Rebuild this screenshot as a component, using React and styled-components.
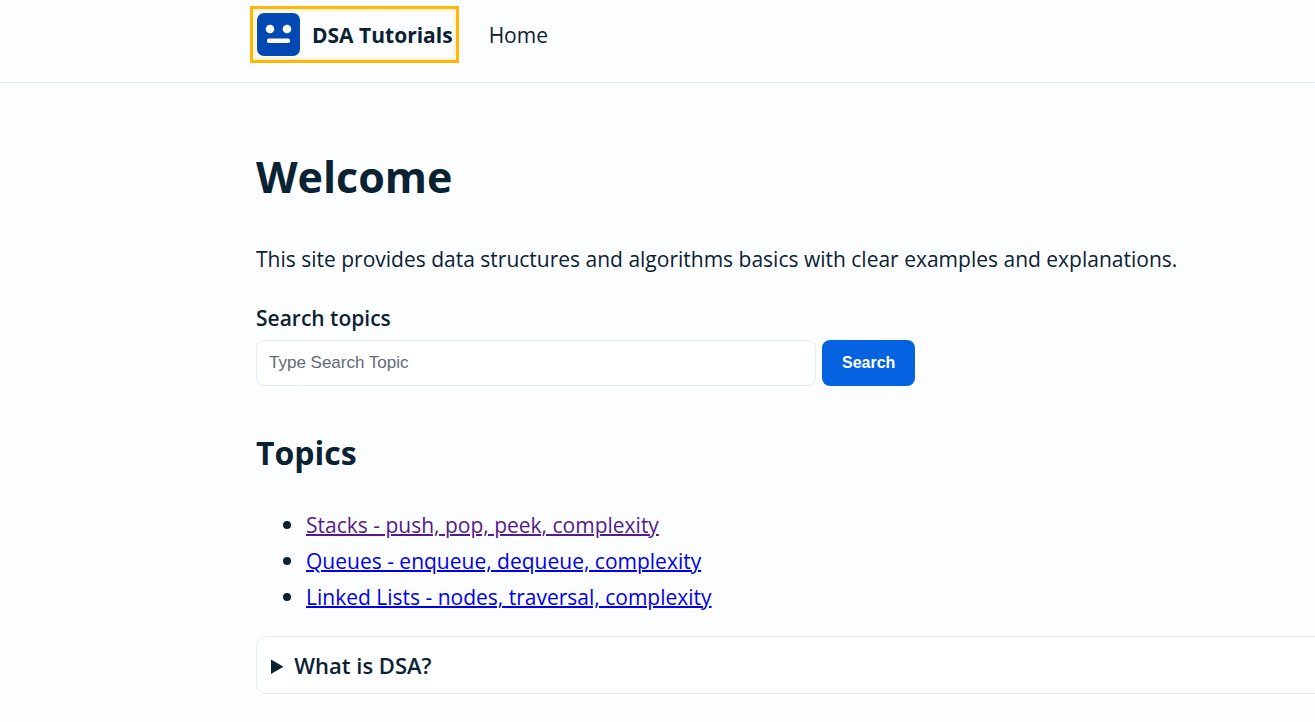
import React from "react";
import styled, { createGlobalStyle } from "styled-components";

const Global = createGlobalStyle`
  *, *::before, *::after { box-sizing: border-box; }
  body {
    margin: 0;
    background: #fcfdff;
    color: #0b2233;
    font-family: "Segoe UI", "Open Sans", "Noto Sans", sans-serif;
    font-size: 21px;
    line-height: 36px;
    overflow-x: hidden;
  }
`;

const Header = styled.header`
  border-bottom: 1px solid #e3edf5;
  padding: 12px 0 25px 256px;
`;

const Nav = styled.nav`
  display: flex;
  align-items: center;
  gap: 36px;
`;

const Brand = styled.a`
  display: flex;
  align-items: center;
  gap: 12px;
  padding: 1px 0;
  color: inherit;
  font-weight: 700;
  text-decoration: none;
  outline: 3px solid #ffb703;
  outline-offset: 3px;
  box-shadow: 0 0 0 3px #fdf5de;
  white-space: nowrap;
`;

const NavLink = styled.a`
  color: inherit;
  text-decoration: none;
`;

const Main = styled.main`
  padding: 63px 0 28px 256px;
`;

const Title = styled.h1`
  margin: 0 0 33px;
  font-size: 43px;
  line-height: 62px;
`;

const Intro = styled.p`
  margin: 0 0 23px;
`;

const SearchForm = styled.form`
  display: grid;
  grid-template-columns: minmax(0, 560px) auto;
  justify-content: start;
  gap: 4px 6px;
`;

const Label = styled.label`
  grid-column: 1 / -1;
  font-weight: 600;
`;

const SearchInput = styled.input`
  width: 100%;
  height: 46px;
  padding: 0 12px;
  border: 1px solid #e3edf5;
  border-radius: 8px;
  background: #fff;
  font: 17px "Liberation Sans", Arial, sans-serif;
  &::placeholder { color: #5f6b76; opacity: 1; }
`;

const SearchButton = styled.button`
  padding: 0 20px;
  border: 0;
  border-radius: 8px;
  background: #0562e0;
  color: #fff;
  font: 700 16px "Liberation Sans", Arial, sans-serif;
`;

const Heading = styled.h2`
  margin: 43px 0 30px;
  font-size: 32px;
  line-height: 48px;
`;

const Topics = styled.ul`
  margin: 0 0 21px;
  padding-left: 50px;
  line-height: 35px;
  li::marker { font-size: 22px; }
`;

const TopicLink = styled.a`
  color: ${({ $visited }) => ($visited ? "#551a8b" : "#0000ee")};
  text-decoration-thickness: 2px;
`;

const Disclosure = styled.details`
  margin-right: -16px;
  padding: 10px 14px;
  border: 1px solid #e3edf5;
  border-radius: 10px;
  background: #fff;
`;

const Summary = styled.summary`
  font-size: 22px;
  font-weight: 600;
`;

const Logo = () => (
  <svg width="44" height="43" viewBox="0 0 44 43" aria-hidden="true">
    <rect x="1" width="43" height="43" rx="7" fill="#0349b4" />
    <circle cx="14" cy="16" r="4.3" fill="#fff" />
    <circle cx="31" cy="16" r="4.3" fill="#fff" />
    <rect x="11" y="25.5" width="23" height="4.5" rx="1.8" fill="#fff" />
  </svg>
);

const topics = [
  { text: "Stacks - push, pop, peek, complexity", visited: true },
  { text: "Queues - enqueue, dequeue, complexity" },
  { text: "Linked Lists - nodes, traversal, complexity" },
];

export default function App() {
  return (
    <>
      <Global />
      <Header>
        <Nav>
          <Brand href="#home"><Logo />DSA Tutorials</Brand>
          <NavLink href="#home">Home</NavLink>
        </Nav>
      </Header>
      <Main>
        <Title>Welcome</Title>
        <Intro>This site provides data structures and algorithms basics with clear examples and explanations.</Intro>
        <SearchForm onSubmit={(e) => e.preventDefault()}>
          <Label htmlFor="topic-search">Search topics</Label>
          <SearchInput id="topic-search" placeholder="Type Search Topic" />
          <SearchButton>Search</SearchButton>
        </SearchForm>
        <Heading>Topics</Heading>
        <Topics>
          {topics.map(({ text, visited }) => (
            <li key={text}><TopicLink href="#topic" $visited={visited}>{text}</TopicLink></li>
          ))}
        </Topics>
        <Disclosure>
          <Summary>What is DSA?</Summary>
          Data structures and algorithms.
        </Disclosure>
      </Main>
    </>
  );
}
